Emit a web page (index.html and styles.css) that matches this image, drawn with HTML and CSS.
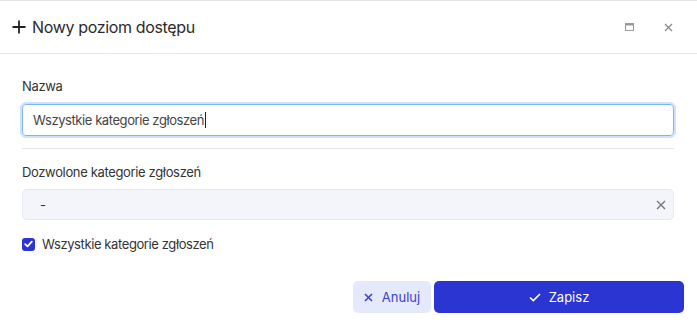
FILE: index.html
```html
<!DOCTYPE html>
<html lang="pl">
<head>
<meta charset="utf-8">
<title>Nowy poziom dostępu</title>
<link rel="stylesheet" href="styles.css">
</head>
<body>
<div class="dialog">
  <div class="header">
    <div class="title">
      <svg class="plus" width="14" height="14" viewBox="0 0 14 14"><path d="M7 0.5V13.5M0.5 7H13.5" stroke="#222" stroke-width="1.8" fill="none"/></svg>
      <span>Nowy poziom dostępu</span>
    </div>
    <div class="tools">
      <svg width="9" height="8" viewBox="0 0 9 8"><rect x="0.5" y="0.5" width="8" height="7" fill="none" stroke="#9a9a9a"/><rect x="0.5" y="0.5" width="8" height="2" fill="#9a9a9a"/></svg>
      <svg width="9" height="9" viewBox="0 0 9 9"><path d="M1 1L8 8M8 1L1 8" stroke="#8a8a8a" stroke-width="1.3" fill="none"/></svg>
    </div>
  </div>
  <div class="body">
    <label class="label">Nazwa</label>
    <div class="input focus">Wszystkie kategorie zgłoszeń<span class="caret"></span></div>
    <div class="divider"></div>
    <label class="label second">Dozwolone kategorie zgłoszeń</label>
    <div class="select">
      <span>-</span>
      <svg width="10" height="10" viewBox="0 0 10 10"><path d="M1 1L9 9M9 1L1 9" stroke="#777" stroke-width="1.4" fill="none"/></svg>
    </div>
    <div class="check">
      <span class="box"><svg width="9" height="8" viewBox="0 0 9 8"><path d="M1.2 4.2L3.5 6.3L7.8 1.6" stroke="#fff" stroke-width="1.8" fill="none" stroke-linecap="round" stroke-linejoin="round"/></svg></span>
      <span>Wszystkie kategorie zgłoszeń</span>
    </div>
  </div>
  <div class="footer">
    <button class="btn cancel"><svg width="9" height="9" viewBox="0 0 9 9"><path d="M1 1L8 8M8 1L1 8" stroke="#3d43c9" stroke-width="1.6" fill="none"/></svg>Anuluj</button>
    <button class="btn save"><svg width="12" height="9" viewBox="0 0 12 9"><path d="M1 4.5L4.3 7.6L11 1" stroke="#fff" stroke-width="1.7" fill="none"/></svg>Zapisz</button>
  </div>
</div>
</body>
</html>
```
FILE: styles.css
```css
* { box-sizing: border-box; }
html, body { margin: 0; padding: 0; background: #fff; }
body { font-family: Inter, "Noto Sans", sans-serif; color: #333; }
.dialog { width: 697px; height: 325px; border-top: 1px solid #e4e4e4; display: flex; flex-direction: column; }
.header { height: 53px; border-bottom: 1px solid #e6e6e6; display: flex; align-items: center; justify-content: space-between; padding: 0 24px 0 12px; }
.title { display: flex; align-items: center; gap: 6px; font-size: 16px; color: #2b2b2b; letter-spacing: -0.35px; }
.plus { display: block; }
.tools { display: flex; align-items: center; gap: 30px; }
.tools svg { display: block; }
.body { padding: 24px 23px 0 22px; display: flex; flex-direction: column; }
.label { font-size: 13px; color: #333; line-height: 16px; display: block; letter-spacing: -0.35px; }
.input { margin-top: 10px; height: 32px; border: 1px solid #7fb5f7; border-radius: 4px; box-shadow: 0 0 0 2px #cfe3fc; padding: 0 10px; display: flex; align-items: center; font-size: 13px; color: #444; letter-spacing: -0.42px; }
.caret { display: inline-block; width: 1px; height: 16px; background: #222; margin-left: 1px; }
.divider { margin-top: 12px; height: 1px; background: #e4e4e4; }
.second { margin-top: 15px; }
.select { margin-top: 9px; height: 31px; background: #f4f5fa; border: 1px solid #e5e8f6; border-radius: 5px; display: flex; align-items: center; justify-content: space-between; padding: 0 7px 0 17px; font-size: 13px; color: #333; }
.select svg { display: block; }
.check { margin-top: 16px; display: flex; align-items: center; gap: 7px; font-size: 13px; color: #333; letter-spacing: -0.4px; }
.box { width: 13px; height: 13px; border-radius: 3px; background: #2b35d1; display: flex; align-items: center; justify-content: center; }
.box svg { display: block; }
.footer { margin-top: auto; padding: 0 13px 12px 0; display: flex; justify-content: flex-end; gap: 3px; }
.btn { height: 32px; border: none; border-radius: 5px; font-family: Inter, "Noto Sans", sans-serif; font-size: 13px; display: flex; align-items: center; justify-content: center; gap: 9px; cursor: pointer; }
.btn svg { display: block; }
.cancel { width: 78px; background: #e5e9fc; color: #3d43c9; }
.save { width: 250px; background: #2b35d1; color: #fff; gap: 8px; }
```
